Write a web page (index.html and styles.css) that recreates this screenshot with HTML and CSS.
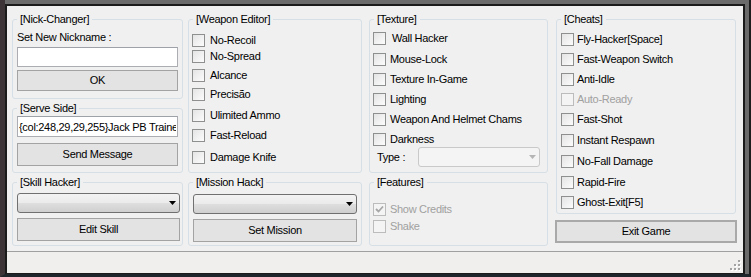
FILE: index.html
```html
<!DOCTYPE html>
<html>
<head>
<meta charset="utf-8">
<title>Trainer</title>
<link rel="stylesheet" href="styles.css">
</head>
<body>
<div class="frame">
  <div class="client">
    <div class="main">
      <div class="col col1">
        <div class="group g-nick">
          <div class="gtitle">[Nick-Changer]</div>
          <div class="nick-lbl">Set New Nickname :</div>
          <input class="txt nick-txt" type="text" value="">
          <button class="btn ok-btn">OK</button>
        </div>
        <div class="group g-serve">
          <div class="gtitle">[Serve Side]</div>
          <input class="txt serve-txt" type="text" value="{col:248,29,29,255}Jack PB Trainer">
          <button class="btn send-btn">Send Message</button>
        </div>
        <div class="group g-skill">
          <div class="gtitle">[Skill Hacker]</div>
          <div class="combo skill-combo"><svg width="7" height="4" viewBox="0 0 7 4"><polygon points="0,0 7,0 3.5,4" fill="#000"/></svg></div>
          <button class="btn skill-btn">Edit Skill</button>
        </div>
      </div>

      <div class="col col2">
        <div class="group g-weapon">
          <div class="gtitle">[Weapon Editor]</div>
          <div class="row"><span class="cb"></span><span class="cl">No-Recoil</span></div>
          <div class="row"><span class="cb"></span><span class="cl">No-Spread</span></div>
          <div class="row"><span class="cb"></span><span class="cl">Alcance</span></div>
          <div class="row"><span class="cb"></span><span class="cl">Precisão</span></div>
          <div class="row"><span class="cb"></span><span class="cl">Ulimited Ammo</span></div>
          <div class="row"><span class="cb"></span><span class="cl">Fast-Reload</span></div>
          <div class="row"><span class="cb"></span><span class="cl">Damage Knife</span></div>
        </div>
        <div class="group g-mission">
          <div class="gtitle">[Mission Hack]</div>
          <div class="combo mission-combo"><svg width="7" height="4" viewBox="0 0 7 4"><polygon points="0,0 7,0 3.5,4" fill="#000"/></svg></div>
          <button class="btn mission-btn">Set Mission</button>
        </div>
      </div>

      <div class="col col3">
        <div class="group g-texture">
          <div class="gtitle">[Texture]</div>
          <div class="row"><span class="cb"></span><span class="cl wall">Wall Hacker</span></div>
          <div class="row"><span class="cb"></span><span class="cl">Mouse-Lock</span></div>
          <div class="row"><span class="cb"></span><span class="cl">Texture In-Game</span></div>
          <div class="row"><span class="cb"></span><span class="cl">Lighting</span></div>
          <div class="row"><span class="cb"></span><span class="cl">Weapon And Helmet Chams</span></div>
          <div class="row"><span class="cb"></span><span class="cl">Darkness</span></div>
          <div class="type-row">
            <span class="type-lbl">Type :</span>
            <div class="combo combo-off"><svg width="7" height="4" viewBox="0 0 7 4"><polygon points="0,0 7,0 3.5,4" fill="#b5b5b5"/></svg></div>
          </div>
        </div>
        <div class="group g-features">
          <div class="gtitle">[Features]</div>
          <div class="row off"><span class="cb"><svg width="11" height="11" viewBox="0 0 11 11"><polyline points="2,5 4.5,7.5 9,2.5" fill="none" stroke="#a6a6a6" stroke-width="1.8"/></svg></span><span class="cl">Show Credits</span></div>
          <div class="row off"><span class="cb"></span><span class="cl">Shake</span></div>
        </div>
      </div>

      <div class="col col4">
        <div class="group g-cheats">
          <div class="gtitle">[Cheats]</div>
          <div class="row"><span class="cb"></span><span class="cl">Fly-Hacker[Space]</span></div>
          <div class="row"><span class="cb"></span><span class="cl">Fast-Weapon Switch</span></div>
          <div class="row"><span class="cb"></span><span class="cl">Anti-Idle</span></div>
          <div class="row off"><span class="cb"></span><span class="cl">Auto-Ready</span></div>
          <div class="row"><span class="cb"></span><span class="cl">Fast-Shot</span></div>
          <div class="row"><span class="cb"></span><span class="cl">Instant Respawn</span></div>
          <div class="row"><span class="cb"></span><span class="cl">No-Fall Damage</span></div>
          <div class="row"><span class="cb"></span><span class="cl">Rapid-Fire</span></div>
          <div class="row"><span class="cb"></span><span class="cl">Ghost-Exit[F5]</span></div>
        </div>
        <button class="btn exit-btn">Exit Game</button>
      </div>
    </div>
    <div class="status">
      <svg class="grip" width="14" height="13" viewBox="0 0 14 13">
        <g fill="#fff"><rect x="10" y="1" width="2" height="2"/><rect x="6" y="5" width="2" height="2"/><rect x="10" y="5" width="2" height="2"/><rect x="2" y="9" width="2" height="2"/><rect x="6" y="9" width="2" height="2"/><rect x="10" y="9" width="2" height="2"/></g>
        <g fill="#a3a3a3"><rect x="9" y="0" width="2" height="2"/><rect x="5" y="4" width="2" height="2"/><rect x="9" y="4" width="2" height="2"/><rect x="1" y="8" width="2" height="2"/><rect x="5" y="8" width="2" height="2"/><rect x="9" y="8" width="2" height="2"/></g>
      </svg>
    </div>
  </div>
</div>
</body>
</html>
```

FILE: styles.css
```css
html, body {
  margin: 0;
  padding: 0;
}
body {
  font-family: "Liberation Sans", Arial, sans-serif;
  font-size: 11px;
  letter-spacing: -0.3px;
  color: #000;
  background: #1f1f1f;
}
.frame {
  width: 751px;
  height: 277px;
  box-sizing: border-box;
  background: #6b6b6b;
  border-left: 5px solid #3d3438;
  border-right: 2px solid #1d1d1d;
  border-bottom: 3px solid #1e252b;
  padding: 4px 4px 0 0;
}
.client {
  height: 270px;
  box-sizing: border-box;
  border: 2px solid #1b1b1b;
  border-bottom-width: 1px;
  background: #f0f0f0;
  display: flex;
  flex-direction: column;
}
.main {
  height: 245px;
  flex: none;
  box-sizing: border-box;
  display: flex;
  padding: 13px 0 0 5px;
}
.status {
  flex: 1;
  border-top: 1px solid #a0a0a0;
  background: #f0efed;
  display: flex;
  justify-content: flex-end;
  align-items: flex-end;
}
.grip {
  display: block;
}
.col {
  display: flex;
  flex-direction: column;
  align-items: flex-start;
}
.col1 { width: 171px; }
.col2 { width: 174px; margin-left: 5px; }
.col3 { width: 179px; margin-left: 7px; }
.col4 { width: 180px; margin-left: 8px; }

.group {
  border: 1px solid #d5dfe5;
  border-radius: 3px;
  box-sizing: border-box;
  width: 100%;
  display: flex;
  flex-direction: column;
  align-items: flex-start;
  flex: none;
}
.gtitle {
  margin: -7px 0 0 4px;
  padding: 0 3px;
  background: #f0f0f0;
  line-height: 13px;
  height: 13px;
  white-space: nowrap;
}

.txt {
  display: block;
  box-sizing: border-box;
  border: 1px solid #abadb3;
  border-top-color: #9ea1a8;
  background: #fff;
  font: inherit;
  letter-spacing: inherit;
  color: #000;
  padding: 0 1px;
  margin: 0;
  outline: none;
}
.btn {
  box-sizing: border-box;
  border: 1px solid #a3a3a3;
  background: #e3e3e3;
  font: inherit;
  letter-spacing: inherit;
  color: #000;
  padding: 0;
  margin: 0;
  display: flex;
  align-items: center;
  justify-content: center;
  line-height: 13px;
}
.combo {
  box-sizing: border-box;
  height: 20px;
  border: 1px solid #707070;
  border-radius: 3px;
  background: linear-gradient(#f3f3f3, #ebebeb 48%, #dedede 52%, #cfcfcf);
  display: flex;
  align-items: center;
  justify-content: flex-end;
  padding-right: 3px;
}
.combo svg { display: block; }
.combo-off {
  border-color: #c9c9c9;
  background: #f4f4f4;
  width: 122px;
}

/* Nick group */
.g-nick { height: 80px; }
.nick-lbl { margin: 5px 0 0 4px; line-height: 13px; }
.nick-txt { margin: 3px 0 0 4px; width: 161px; height: 20px; }
.ok-btn { margin: 3px 0 0 4px; width: 161px; height: 21px; }

.g-serve { margin-top: 9px; height: 65px; }
.serve-txt { margin: 1px 0 0 4px; width: 161px; height: 21px; }
.send-btn { margin: 6px 0 0 4px; width: 161px; height: 23px; }

.g-skill { margin-top: 9px; height: 64px; }
.skill-combo { margin: 4px 0 0 4px; width: 163px; }
.skill-btn { margin: 5px 0 0 4px; width: 163px; height: 23px; }

/* Checkbox rows */
.row {
  display: flex;
  align-items: center;
  height: 13px;
  line-height: 13px;
  white-space: nowrap;
}
.cb {
  box-sizing: border-box;
  width: 13px;
  height: 13px;
  border: 1px solid #8e8f8f;
  background: linear-gradient(135deg, #e4e4e4, #fcfcfc);
  flex: none;
  display: flex;
  align-items: center;
  justify-content: center;
}
.cb svg { display: block; }
.cl { margin-left: 4px; margin-top: -1px; }
.off .cb { border-color: #bcbcbc; background: #f4f4f4; }
.off .cl { color: #a0a0a0; }

.g-weapon { height: 154px; }
.g-weapon .row { margin-left: 3px; }
.g-weapon .cl { margin-left: 5px; }
.g-weapon .row:nth-child(2) { margin-top: 8px; }
.g-weapon .row:nth-child(3) { margin-top: 3px; }
.g-weapon .row:nth-child(4) { margin-top: 6px; }
.g-weapon .row:nth-child(5) { margin-top: 6px; }
.g-weapon .row:nth-child(6) { margin-top: 8px; }
.g-weapon .row:nth-child(7) { margin-top: 7px; }
.g-weapon .row:nth-child(8) { margin-top: 9px; }

.g-mission { margin-top: 9px; height: 64px; }
.mission-combo { margin: 5px 0 0 4px; width: 164px; }
.mission-btn { margin: 5px 0 0 4px; width: 164px; height: 23px; }

.g-texture { height: 154px; }
.g-texture .row { margin-left: 3px; margin-top: 7px; }
.g-texture .row:nth-child(2) { margin-top: 6px; }
.g-texture .row:nth-child(3) { margin-top: 8px; }
.g-texture .wall { margin-left: 6px; }
.type-row {
  display: flex;
  align-items: center;
  margin-top: 1px;
  height: 20px;
}
.type-lbl { margin-left: 7px; width: 41px; }

.g-features { margin-top: 9px; height: 64px; }
.g-features .row { margin-left: 3px; }
.g-features .row:nth-child(2) { margin-top: 14px; }
.g-features .row:nth-child(3) { margin-top: 4px; }

.g-cheats { height: 195px; }
.g-cheats .row { margin-left: 4px; margin-top: 7px; }
.g-cheats .cl { margin-left: 3px; }
.g-cheats .row:nth-child(7),
.g-cheats .row:nth-child(8),
.g-cheats .row:nth-child(9) { margin-top: 8px; }

.exit-btn {
  margin: 6px 0 0 -1px;
  width: 182px;
  height: 23px;
  border: 2px solid #a9a9a9;
}
```
